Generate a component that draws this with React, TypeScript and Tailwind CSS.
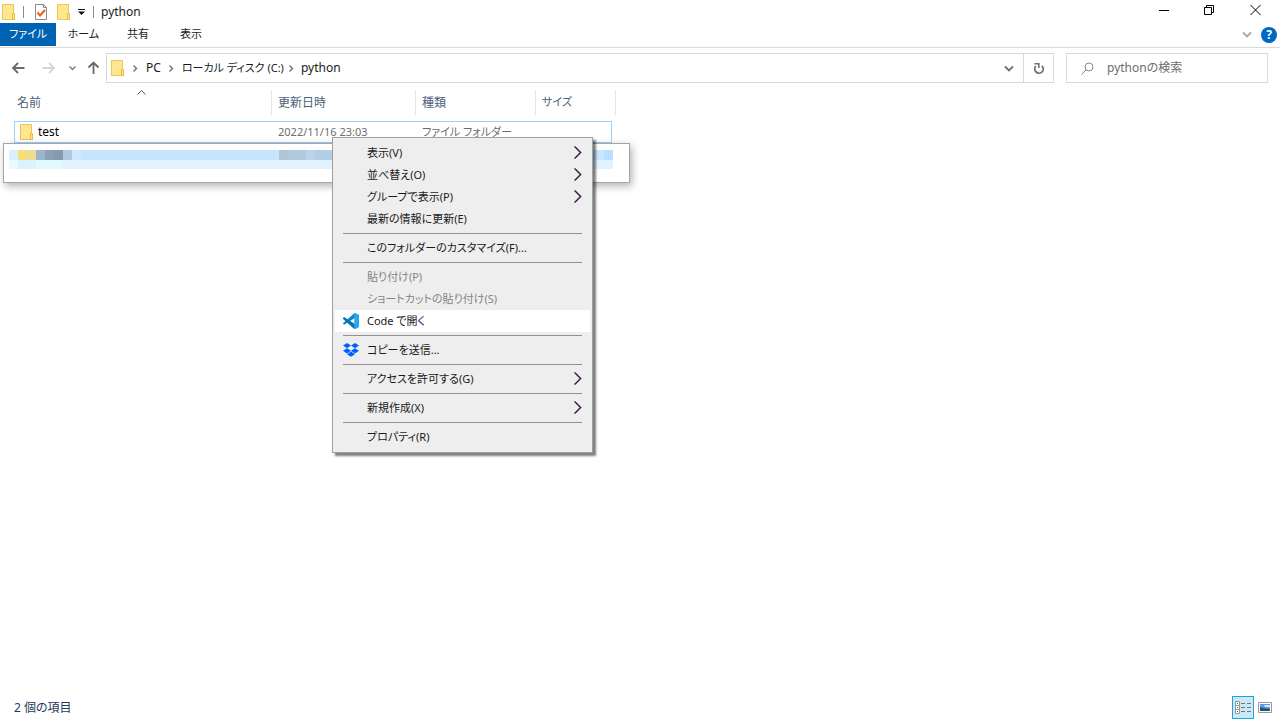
import type { ReactNode } from 'react'

interface MenuEntry {
  label: string
  icon?: ReactNode
  submenu?: boolean
  disabled?: boolean
  active?: boolean
}

interface IconProps {
  className?: string
}

function FolderIcon({ className = '' }: IconProps) {
  return (
    <svg width="14" height="16" viewBox="0 0 14 16" className={`shrink-0 ${className}`}>
      <path d="M.5.5h11v9.5h1v5.5H.5z" fill="#ffe792" stroke="#ecc651" />
      <path d="M10.5 9.5h2v6h-2z" fill="#ffe694" stroke="#e8bd43" />
    </svg>
  )
}

function PropertiesIcon() {
  return (
    <svg width="13" height="16" viewBox="0 0 13 16" className="shrink-0">
      <path d="M.5.5h8l3 3v12H.5z" fill="#fff" stroke="#8a8a8a" />
      <path d="M8.5.5v3h3" fill="none" stroke="#8a8a8a" />
      <path d="M2.5 8.5l2.5 3L10 6" fill="none" stroke="#ea5a1f" strokeWidth="2" />
    </svg>
  )
}

function Chevron({ className = '' }: IconProps) {
  return (
    <svg width="6" height="8" viewBox="0 0 6 8" className={`shrink-0 ${className}`}>
      <path d="M1.5 1.500l3 3-3 3" fill="none" stroke="#6e6e6e" strokeWidth="1.400" />
    </svg>
  )
}

function ChevronDown({ className = '' }: IconProps) {
  return (
    <svg width="10" height="7" viewBox="0 0 10 7" className={className}>
      <path d="M1 1.5l4 4 4-4" fill="none" stroke="currentColor" strokeWidth="1.8" />
    </svg>
  )
}

function ArrowIcon({ className = '' }: IconProps) {
  return (
    <svg width="13" height="12" viewBox="0 0 13 12" className={className}>
      <path d="M12.500 6H1.5M6 1L1 6l5 5" fill="none" stroke="currentColor" strokeWidth="1.8" />
    </svg>
  )
}

function VsCodeIcon() {
  return (
    <svg width="16" height="16" viewBox="0 0 16 16">
      <path d="M1.2 11.8L.3 11c-.4-.3-.4-.7 0-1L11.5 0l2 4z" fill="#1287d0" />
      <path d="M1.2 4.2L.3 5c-.4.3-.4.7 0 1L11.5 16l2-4z" fill="#0b6fb8" />
      <path d="M1.2 4.2L11.5 12.3V16L.3 6c-.4-.3-.4-.7 0-1z" fill="#0b6fb8" />
      <path d="M11.3.2c.3-.3.6-.2.9-.1L15.4 1.600c.4.2.6.5.6 1v10.800c0 .5-.2.8-.6 1l-3.200 1.500c-.4.2-.7.1-.9-.1z" fill="#27a5ee" />
    </svg>
  )
}

function DropboxIcon() {
  return (
    <svg width="16" height="14" viewBox="0 0 16 14" fill="#0061fe">
      <path d="M4 0l4 2.6-4 2.600L0 2.6zM12 0l4 2.6-4 2.600-4-2.600zM4 5.200l4 2.600-4 2.600-4-2.600zM12 5.200l4 2.600-4 2.600-4-2.600zM4 11.200l4-2.600 4 2.600-4 2.600z" />
    </svg>
  )
}

const MENU_GROUPS: MenuEntry[][] = [
  [
    { label: '表示(V)', submenu: true },
    { label: '並べ替え(O)', submenu: true },
    { label: 'グループで表示(P)', submenu: true },
    { label: '最新の情報に更新(E)' },
  ],
  [{ label: 'このフォルダーのカスタマイズ(F)...' }],
  [
    { label: '貼り付け(P)', disabled: true },
    { label: 'ショートカットの貼り付け(S)', disabled: true },
    { label: 'Code で開く', icon: <VsCodeIcon />, active: true },
  ],
  [{ label: 'コピーを送信...', icon: <DropboxIcon /> }],
  [{ label: 'アクセスを許可する(G)', submenu: true }],
  [{ label: '新規作成(X)', submenu: true }],
  [{ label: 'プロパティ(R)' }],
]

const MOSAIC_TOP = [
  'w-[9px] bg-[#d9f1ff]',
  'w-[9px] bg-[#f7dd7c]',
  'w-[9px] bg-[#ecdf90]',
  'w-[9px] bg-[#9db4cf]',
  'w-[9px] bg-[#8c9fb8]',
  'w-[9px] bg-[#859ab0]',
  'w-[9px] bg-[#afcbdf]',
  'w-[9px] bg-[#cfe8ff]',
  'w-[198px] bg-[#c5e5ff]',
  'w-[9px] bg-[#aec6d8]',
  'w-[18px] bg-[#b0cadf]',
  'w-[9px] bg-[#b9d4ea]',
  'w-[18px] bg-[#b3cde3]',
  'grow bg-[#c5e5ff]',
  'w-[9px] bg-[#c8e6ff]',
  'w-[9px] bg-[#bbdfff]',
]

const MOSAIC_BOTTOM = [
  'w-[9px] bg-[#edf8ff]',
  'w-[18px] bg-[#dbf2ff]',
  'w-[27px] bg-[#e4f8ff]',
  'w-[9px] bg-[#e0f4ff]',
  'grow bg-[#e0f2ff]',
]

function TitleBar() {
  return (
    <header className="flex h-[23px] items-center pr-px pl-[2px]">
      <FolderIcon />
      <span className="ml-[7px] h-3 w-px bg-[#8c8c8c]" />
      <button aria-label="プロパティ" className="ml-[11px]">
        <PropertiesIcon />
      </button>
      <button aria-label="新しいフォルダー" className="ml-[9px]">
        <FolderIcon />
      </button>
      <button aria-label="クイック アクセスのカスタマイズ" className="ml-[7px]">
        <svg width="7" height="6" viewBox="0 0 7 6">
          <path d="M0 0h7v1H0zM0 2.5h7L3.5 6z" fill="#111" />
        </svg>
      </button>
      <span className="ml-2 h-3 w-px bg-[#8c8c8c]" />
      <h1 className="ml-[7px]">python</h1>
      <div className="ml-auto flex self-start">
        <button aria-label="最小化" className="flex h-5 w-[46px] items-center justify-center">
          <svg width="10" height="10" viewBox="0 0 10 10">
            <path d="M0 5.5h10" stroke="#000" />
          </svg>
        </button>
        <button aria-label="元に戻す" className="flex h-5 w-[45px] items-center justify-center">
          <svg width="11" height="10" viewBox="0 0 11 10">
            <path d="M.5 2.5h7v7h-7zM2.5 2V.5h7v7H8" fill="none" stroke="#000" />
          </svg>
        </button>
        <button aria-label="閉じる" className="flex h-5 w-[47px] items-center justify-center">
          <svg width="11" height="10" viewBox="0 0 11 10">
            <path d="M.5 0l10 10M10.5 0l-10 10" stroke="#000" />
          </svg>
        </button>
      </div>
    </header>
  )
}

function Ribbon() {
  return (
    <nav className="flex h-[25px] items-start border-b border-[#dadbdc] text-[11px]">
      <button className="h-[23px] w-14 bg-[#0063b1] text-white">ファイル</button>
      <button className="h-[23px] w-[55px]">ホーム</button>
      <button className="h-[23px] w-[54px]">共有</button>
      <button className="h-[23px] w-[52px]">表示</button>
      <div className="ml-auto flex h-[23px] items-center gap-[9px] pr-[3px]">
        <button aria-label="リボンの展開" className="text-[#a8a8a8]">
          <ChevronDown />
        </button>
        <button
          aria-label="ヘルプ"
          className="h-4 w-4 rounded-full bg-[#0067c5] text-center text-xs leading-4 font-bold text-white"
        >
          ?
        </button>
      </div>
    </nav>
  )
}

function AddressBar() {
  return (
    <div className="flex h-[40px] items-center px-3">
      <button aria-label="戻る" className="text-[#6a6a6a]">
        <ArrowIcon />
      </button>
      <button aria-label="進む" className="ml-[17px] text-[#d6d6d6]">
        <ArrowIcon className="rotate-180" />
      </button>
      <button aria-label="最近表示した場所" className="ml-[14px] text-[#808080]">
        <svg width="7" height="5" viewBox="0 0 7 5">
          <path d="M.5.5l3 3 3-3" fill="none" stroke="currentColor" strokeWidth="1.5" />
        </svg>
      </button>
      <button aria-label="上へ" className="ml-[11px] text-[#6a6a6a]">
        <ArrowIcon className="rotate-90" />
      </button>
      <div className="ml-[6px] flex h-[30px] grow items-center border border-[#d9d9d9] pl-1">
        <FolderIcon />
        <Chevron className="ml-[7px]" />
        <button className="ml-2">PC</button>
        <Chevron className="ml-[7px]" />
        <button className="ml-2 text-[11px]">ローカル ディスク (C:)</button>
        <Chevron className="ml-1" />
        <button className="ml-[7px]">python</button>
        <button aria-label="履歴" className="mr-[9px] ml-auto text-[#707070]">
          <ChevronDown />
        </button>
        <button
          aria-label="最新の情報に更新"
          className="flex h-full w-[30px] items-center justify-center border-l border-[#d9d9d9]"
        >
          <svg width="12" height="12" viewBox="0 0 12 12">
            <path d="M2.800 4.200A4.200 4.200 0 1 0 9 4" fill="none" stroke="#707070" strokeWidth="1.8" />
            <path d="M1.500 1.800h4.300v4.200" fill="none" stroke="#707070" strokeWidth="1.6" />
          </svg>
        </button>
      </div>
      <label className="ml-3 flex h-[30px] w-[202px] items-center border border-[#d9d9d9] pl-[14px]">
        <svg width="13" height="13" viewBox="0 0 13 13" className="shrink-0">
          <circle cx="8" cy="5" r="4" fill="none" stroke="#8a8a8a" />
          <path d="M5 8L.5 12.5" stroke="#8a8a8a" />
        </svg>
        <input
          type="search"
          aria-label="検索"
          placeholder="pythonの検索"
          className="ml-[13px] w-full min-w-0 outline-none placeholder:text-[#6d6d6d]"
        />
      </label>
    </div>
  )
}

function FileList() {
  return (
    <table className="ml-[14px] w-[602px] table-fixed border-separate border-spacing-0 text-left">
      <thead>
        <tr className="h-[25px] text-[#4c607a]">
          <th className="relative w-[258px] border-r border-[#e5e5e5] pl-[3px] font-normal">
            名前
            <svg width="9" height="5" viewBox="0 0 9 5" className="absolute top-0 left-[123px]">
              <path d="M.5 4.5l4-4 4 4" fill="none" stroke="#555" />
            </svg>
          </th>
          <th className="w-[144px] border-r border-[#e5e5e5] pl-[6px] font-normal">更新日時</th>
          <th className="w-[120px] border-r border-[#e5e5e5] pl-[6px] font-normal">種類</th>
          <th className="w-[80px] border-r border-[#e5e5e5] pl-[6px] text-[11px] font-normal">サイズ</th>
        </tr>
      </thead>
      <tbody>
        <tr className="text-[11px] text-[#6d6d6d]">
          <td className="pt-[6px]">
            <div className="flex h-[22px] items-center border border-r-0 border-[#99d1ff] pl-[5px] text-xs text-black">
              <FolderIcon />
              <span className="ml-1">test</span>
            </div>
          </td>
          <td className="pt-[6px]">
            <div className="flex h-[22px] items-center border-y border-[#99d1ff] pl-[6px]">
              2022/11/16 23:03
            </div>
          </td>
          <td className="pt-[6px]">
            <div className="flex h-[22px] items-center border-y border-[#99d1ff] pl-[6px]">
              ファイル フォルダー
            </div>
          </td>
          <td className="pt-[6px]">
            <div className="mr-1 h-[22px] border border-l-0 border-[#99d1ff]" />
          </td>
        </tr>
      </tbody>
    </table>
  )
}

/** Pixelated strip that hides the second file of the folder. */
function RedactedRow() {
  return (
    <div className="absolute top-[143px] left-[3px] h-10 w-[627px] border border-[#a5a5a5] bg-white px-[5px] pt-[6px] shadow-[2px_3px_8px_rgba(0,0,0,0.3)]">
      <div className="flex h-[10px] w-[604px]">
        {MOSAIC_TOP.map((cell, index) => (
          <span key={index} className={cell} />
        ))}
      </div>
      <div className="flex h-[9px] w-[604px]">
        {MOSAIC_BOTTOM.map((cell, index) => (
          <span key={index} className={cell} />
        ))}
      </div>
    </div>
  )
}

function MenuItem({ label, icon, submenu, disabled, active }: MenuEntry) {
  return (
    <button
      role="menuitem"
      disabled={disabled}
      className={`flex h-[22px] w-full items-center pr-2 text-left ${active ? 'bg-white' : ''} ${disabled ? 'text-[#848484]' : ''}`}
    >
      <span className="flex w-8 shrink-0 justify-center">{icon}</span>
      <span className="grow">{label}</span>
      {submenu && (
        <svg width="8" height="14" viewBox="0 0 8 14" fill="none">
          <path d="M1.5.5l6 6-6 6" stroke="#4aa0f0" />
          <path d="M.5.5l6 6-6 6" stroke="#5a1420" strokeWidth="1.2" />
        </svg>
      )}
    </button>
  )
}

function ContextMenu() {
  return (
    <div
      role="menu"
      className="absolute top-[137px] left-[332px] w-[261px] border border-[#a0a0a0] bg-[#eeeeee] px-[2px] py-1 text-[11px] shadow-[3px_3px_2px_rgba(0,0,0,0.5)]"
    >
      {MENU_GROUPS.map((group, index) => (
        <div key={group[0].label}>
          {index > 0 && <hr className="mx-2 my-[3px] border-[#919191]" />}
          {group.map((entry) => (
            <MenuItem key={entry.label} {...entry} />
          ))}
        </div>
      ))}
    </div>
  )
}

function StatusBar() {
  return (
    <footer className="flex h-[25px] items-center pr-[6px] pl-[14px] text-[#1e395b]">
      <span>2 個の項目</span>
      <button
        aria-label="詳細"
        className="ml-auto flex h-[23px] w-[22px] items-center justify-center border border-[#26a0da] bg-[#cbe8f6]"
      >
        <svg width="16" height="13" viewBox="0 0 16 13">
          <path d="M.5.5h4v12h-4z" fill="#fff" stroke="#999" />
          <path d="M0 4.5h5M0 8.5h5" stroke="#999" />
          <path d="M2 2h1v1H2z" fill="#2e8b57" />
          <path d="M2 6h1v1H2z" fill="#1e78e0" />
          <path d="M2 10h1v1H2z" fill="#d02020" />
          <path d="M6 2.5h4M12 2.5h4M6 6.5h4M12 6.5h4M6 10.5h4M12 10.5h4" stroke="#777" />
        </svg>
      </button>
      <button aria-label="大アイコン" className="ml-1 mr-[2px]">
        <svg width="14" height="11" viewBox="0 0 14 11">
          <path d="M.5.5h13v10H.5z" fill="#fff" stroke="#999" />
          <path d="M2 2h10v7H2z" fill="#5c9be0" />
          <path d="M6 3h6v2H7z" fill="#cfe4f8" />
          <path d="M2 5l3 1 7 1v2H2z" fill="#28516b" />
        </svg>
      </button>
    </footer>
  )
}

export default function App() {
  return (
    <div className="relative flex min-h-screen flex-col bg-white font-['Noto_Sans','Noto_Sans_CJK_JP',sans-serif] text-xs text-[#1a1a1a] [font-feature-settings:'palt']">
      <TitleBar />
      <Ribbon />
      <AddressBar />
      <main className="grow pt-[2px]">
        <FileList />
      </main>
      <StatusBar />
      <RedactedRow />
      <ContextMenu />
    </div>
  )
}
